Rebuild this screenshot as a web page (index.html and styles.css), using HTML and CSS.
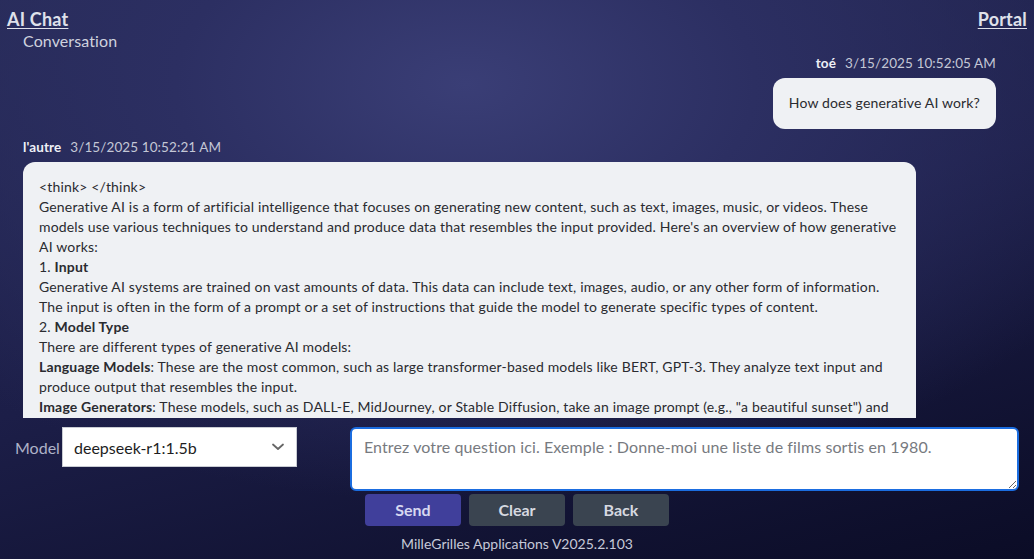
FILE: index.html
```html
<!DOCTYPE html>
<html lang="fr">
<head>
<meta charset="utf-8">
<title>AI Chat</title>
<link rel="stylesheet" href="styles.css">
</head>
<body>
<header class="topbar">
  <a class="toplink" href="#">AI Chat</a>
  <a class="toplink" href="#">Portal</a>
</header>
<main class="chat">
  <h2 class="section-title">Conversation</h2>
  <div class="msg msg-user">
    <div class="msg-meta"><span class="author">toé</span><span class="date">3/15/2025 10:52:05 AM</span></div>
    <div class="bubble">How does generative AI work?</div>
  </div>
  <div class="msg msg-bot">
    <div class="msg-meta"><span class="author">l'autre</span><span class="date">3/15/2025 10:52:21 AM</span></div>
    <div class="bubble bubble-wide">
      <p>&lt;think&gt; &lt;/think&gt;</p>
      <p>Generative AI is a form of artificial intelligence that focuses on generating new content, such as text, images, music, or videos. These models use various techniques to understand and produce data that resembles the input provided. Here's an overview of how generative AI works:</p>
      <p>1. <strong>Input</strong></p>
      <p>Generative AI systems are trained on vast amounts of data. This data can include text, images, audio, or any other form of information. The input is often in the form of a prompt or a set of instructions that guide the model to generate specific types of content.</p>
      <p>2. <strong>Model Type</strong></p>
      <p>There are different types of generative AI models:</p>
      <p><strong>Language Models</strong>: These are the most common, such as large transformer-based models like BERT, GPT-3. They analyze text input and produce output that resembles the input.</p>
      <p><strong>Image Generators</strong>: These models, such as DALL-E, MidJourney, or Stable Diffusion, take an image prompt (e.g., "a beautiful sunset") and generate a new image that matches the description.</p>
      <p>3. <strong>Training</strong></p>
      <p>The model learns patterns, structures and relationships in the training data so that it can reproduce similar content.</p>
    </div>
  </div>
</main>
<section class="composer">
  <div class="controls">
    <label class="model-field">
      <span class="model-label">Model</span>
      <span class="select">
        <span class="select-value">deepseek-r1:1.5b</span>
        <svg class="chevron" width="14" height="10" viewBox="0 0 14 10"><path d="M2 2.5 L7 7 L12 2.5" fill="none" stroke="#666" stroke-width="1.8" stroke-linecap="round" stroke-linejoin="round"/></svg>
      </span>
    </label>
    <textarea class="question" placeholder="Entrez votre question ici. Exemple : Donne-moi une liste de films sortis en 1980."></textarea>
  </div>
  <div class="buttons">
    <button class="btn btn-primary">Send</button>
    <button class="btn btn-secondary">Clear</button>
    <button class="btn btn-secondary">Back</button>
  </div>
  <footer class="footer">MilleGrilles Applications V2025.2.103</footer>
</section>
</body>
</html>
```

FILE: styles.css
```css
html, body {
  margin: 0;
  padding: 0;
  height: 100%;
}
body {
  font-family: Lato, "Noto Sans", sans-serif;
  color: #e2e4ee;
  background:
    radial-gradient(ellipse 70% 75% at 45% 15%, #3a3e76 0%, #2c2f62 40%, rgba(20,21,55,0) 100%),
    linear-gradient(165deg, #262a55 0%, #1c1e48 50%, #0b0c26 100%);
  display: flex;
  flex-direction: column;
  overflow: hidden;
}
.topbar {
  height: 30px;
  display: flex;
  justify-content: space-between;
  align-items: flex-start;
  padding: 0 7px;
  box-sizing: border-box;
}
.toplink {
  color: #dfe1ea;
  font-weight: 700;
  font-size: 18px;
  line-height: 20px;
  margin-top: 9px;
  letter-spacing: 0.2px;
  text-decoration: underline;
  text-underline-offset: 2px;
}
.chat {
  flex: 1;
  overflow-y: scroll;
  padding: 0 38px 0 23px;
  min-height: 0;
}
.chat::-webkit-scrollbar { width: 6px; }
.chat::-webkit-scrollbar-track { background: #f1f1f1; }
.chat::-webkit-scrollbar-thumb { background: #c1c1c1; }
.section-title {
  margin: 1px 0 0 0;
  font-size: 16px;
  font-weight: 400;
  line-height: 20px;
  color: #cfd2de;
  letter-spacing: 0.1px;
}
.msg { display: flex; flex-direction: column; }
.msg-user { align-items: flex-end; margin-top: 3px; }
.msg-bot { align-items: flex-start; margin-top: 9px; }
.msg-meta {
  font-size: 13.5px;
  line-height: 18px;
  display: flex;
  gap: 9px;
  margin-bottom: 6px;
  letter-spacing: 0.1px;
}
.author { font-weight: 700; color: #eef0f6; }
.date { color: #c4c7d6; }
.bubble {
  background: #eff1f4;
  color: #2a2b30;
  border-radius: 12px;
  font-size: 14px;
  line-height: 20px;
  padding: 15px 16px 16px;
  letter-spacing: 0.15px;
}
.bubble-wide {
  width: 861px;
  letter-spacing: 0.17px;
}
.bubble p { margin: 0; }
.bubble strong { font-weight: 700; }
.composer {
  height: 141px;
  flex: none;
  display: flex;
  flex-direction: column;
}
.controls {
  display: flex;
  align-items: flex-start;
  padding: 9px 15px 0 15px;
}
.model-field {
  display: flex;
  align-items: center;
  width: 335px;
}
.model-label {
  font-size: 16px;
  color: #aeb2c8;
  width: 47px;
  flex: none;
}
.select {
  width: 235px;
  height: 40px;
  box-sizing: border-box;
  background: #fff;
  border: 1px solid #c9ccd3;
  display: flex;
  align-items: center;
  justify-content: space-between;
  padding: 0 11px 0 11px;
  color: #1d1d22;
  font-size: 16px;
}
.chevron { flex: none; }
.question {
  flex: 1;
  height: 64px;
  box-sizing: border-box;
  border: 2px solid #1b6de0;
  border-radius: 6px;
  background: #fff;
  font-family: inherit;
  font-size: 16px;
  line-height: 20px;
  padding: 8px 12px;
  resize: vertical;
  outline: none;
  letter-spacing: 0.1px;
}
.question::placeholder { color: #777a80; }
.buttons {
  display: flex;
  justify-content: center;
  gap: 8px;
  margin-top: 3px;
}
.btn {
  width: 96px;
  height: 32px;
  border: none;
  border-radius: 4px;
  font-family: inherit;
  font-size: 16px;
  font-weight: 700;
  padding: 0 0 2px;
}
.btn-primary { background: #403f9b; color: #d7d8f0; }
.btn-secondary { background: #3a4450; color: #d6d9e0; }
.footer {
  text-align: center;
  font-size: 14px;
  color: #c6c9d8;
  margin-top: 9px;
}
```
